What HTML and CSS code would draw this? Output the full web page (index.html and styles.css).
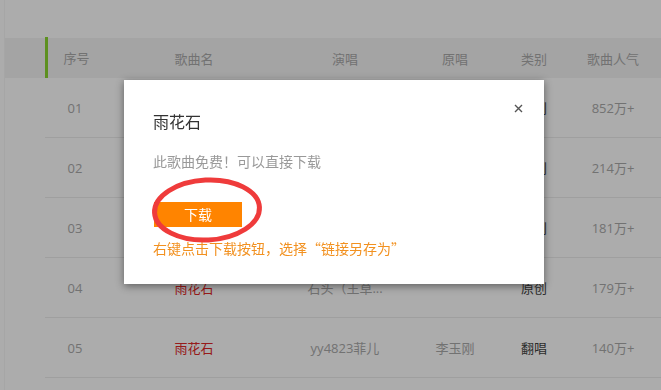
FILE: index.html
```html
<!DOCTYPE html>
<html lang="zh-CN">
<head>
    <meta charset="UTF-8">
    <meta name="viewport" content="width=device-width, initial-scale=1.0">
    <title>雨花石 - 歌曲下载</title>
    <link rel="stylesheet" href="styles.css">
</head>
<body>

<!-- 歌曲列表 -->
<div class="song-list">
    <div class="list-head">
        <div class="col col-num first">序号</div>
        <div class="col col-name">歌曲名</div>
        <div class="col col-singer">演唱</div>
        <div class="col col-orig">原唱</div>
        <div class="col col-type">类别</div>
        <div class="col col-hot">歌曲人气</div>
    </div>
    <div class="list-row">
        <div class="col col-num">01</div>
        <div class="col col-name song">雨花石</div>
        <div class="col col-singer">石头（王草...</div>
        <div class="col col-orig"></div>
        <div class="col col-type dark">原创</div>
        <div class="col col-hot">852万+</div>
    </div>
    <div class="list-row">
        <div class="col col-num">02</div>
        <div class="col col-name song">雨花石</div>
        <div class="col col-singer">石头（王草...</div>
        <div class="col col-orig"></div>
        <div class="col col-type dark">原创</div>
        <div class="col col-hot">214万+</div>
    </div>
    <div class="list-row">
        <div class="col col-num">03</div>
        <div class="col col-name song">雨花石</div>
        <div class="col col-singer">石头（王草...</div>
        <div class="col col-orig"></div>
        <div class="col col-type dark">原创</div>
        <div class="col col-hot">181万+</div>
    </div>
    <div class="list-row">
        <div class="col col-num">04</div>
        <div class="col col-name song">雨花石</div>
        <div class="col col-singer">石头（王草...</div>
        <div class="col col-orig"></div>
        <div class="col col-type dark">原创</div>
        <div class="col col-hot">179万+</div>
    </div>
    <div class="list-row">
        <div class="col col-num">05</div>
        <div class="col col-name song">雨花石</div>
        <div class="col col-singer">yy4823菲儿</div>
        <div class="col col-orig">李玉刚</div>
        <div class="col col-type dark">翻唱</div>
        <div class="col col-hot">140万+</div>
    </div>
</div>

<!-- 遮罩层 -->
<div class="mask"></div>

<!-- 下载弹窗 -->
<div class="dialog">
    <span class="dialog-close">
        <svg width="9" height="9" viewBox="0 0 9 9"><path d="M1 1L8 8M8 1L1 8" stroke="#555" stroke-width="1.4" fill="none"/></svg>
    </span>
    <h2 class="dialog-title">雨花石</h2>
    <p class="dialog-text">此歌曲免费！可以直接下载</p>
    <a class="download-button" href="#">下载</a>
    <p class="dialog-tip">右键点击下载按钮，选择“链接另存为”</p>
    <!-- 红色圈注 -->
    <svg class="circle-mark" width="124" height="74" viewBox="0 0 124 74">
        <ellipse cx="62" cy="37" rx="52.5" ry="30" transform="rotate(-3 62 37)" fill="none" stroke="#ef3b3b" stroke-width="5"/>
    </svg>
</div>

</body>
</html>
```

FILE: styles.css
```css
body {
    margin: 0;
    background-color: #fff;
    font-family: "Open Sans", "Noto Sans CJK SC", sans-serif;
    font-size: 13px;
    color: #b0b0b0;
}
.song-list {
    padding-top: 38px;
    margin-left: 4px;
    border-left: 1px solid #f6f6f6;
    height: 352px;
}
.list-head {
    display: flex;
    height: 40px;
    padding-left: 40px;
    background-color: #f3f3f3;
}
.list-row {
    display: flex;
    box-sizing: border-box;
    height: 60px;
    margin-left: 40px;
    border-bottom: 1px solid #ececec;
}
.col {
    display: flex;
    align-items: center;
    justify-content: center;
    white-space: nowrap;
    color: #aaa;
}
.first {
    border-left: 3px solid #8ad630;
    margin-top: -1px;
    box-sizing: border-box;
}
.col-num {
    width: 60px;
}
.col-name {
    width: 178px;
}
.col-singer {
    width: 124px;
}
.col-orig {
    width: 96px;
}
.col-type {
    width: 62px;
}
.col-hot {
    width: 96px;
}
.song {
    color: #e02828;
}
.dark {
    color: #444;
}
/* 遮罩层 */
.mask {
    position: fixed;
    left: 0;
    top: 0;
    width: 100%;
    height: 100%;
    background-color: rgba(0,0,0,0.325);
}
/* 弹窗 */
.dialog {
    position: absolute;
    left: 124px;
    top: 80px;
    width: 420px;
    height: 204px;
    box-sizing: border-box;
    padding: 27px 29px 0;
    background-color: #fff;
    box-shadow: 0 2px 8px rgba(0,0,0,0.45);
    font-family: "Noto Sans CJK SC", sans-serif;
}
.dialog-close {
    position: absolute;
    left: 390px;
    top: 18px;
    cursor: pointer;
}
.dialog-title {
    margin: 0;
    font-size: 16px;
    font-weight: normal;
    line-height: 28px;
    color: #333;
}
.dialog-text {
    margin: 16px 0 0;
    font-size: 14px;
    line-height: 20px;
    color: #999;
}
.download-button {
    display: block;
    width: 88px;
    height: 25px;
    margin: 31px 0 0 1px;
    background-color: #ff8400;
    color: #fff;
    font-size: 14px;
    line-height: 25px;
    text-align: center;
    text-decoration: none;
}
.dialog-tip {
    margin: 2px 0 0;
    font-size: 14px;
    line-height: 38px;
    color: #f29120;
}
.circle-mark {
    position: absolute;
    left: 21px;
    top: 93px;
}
```
